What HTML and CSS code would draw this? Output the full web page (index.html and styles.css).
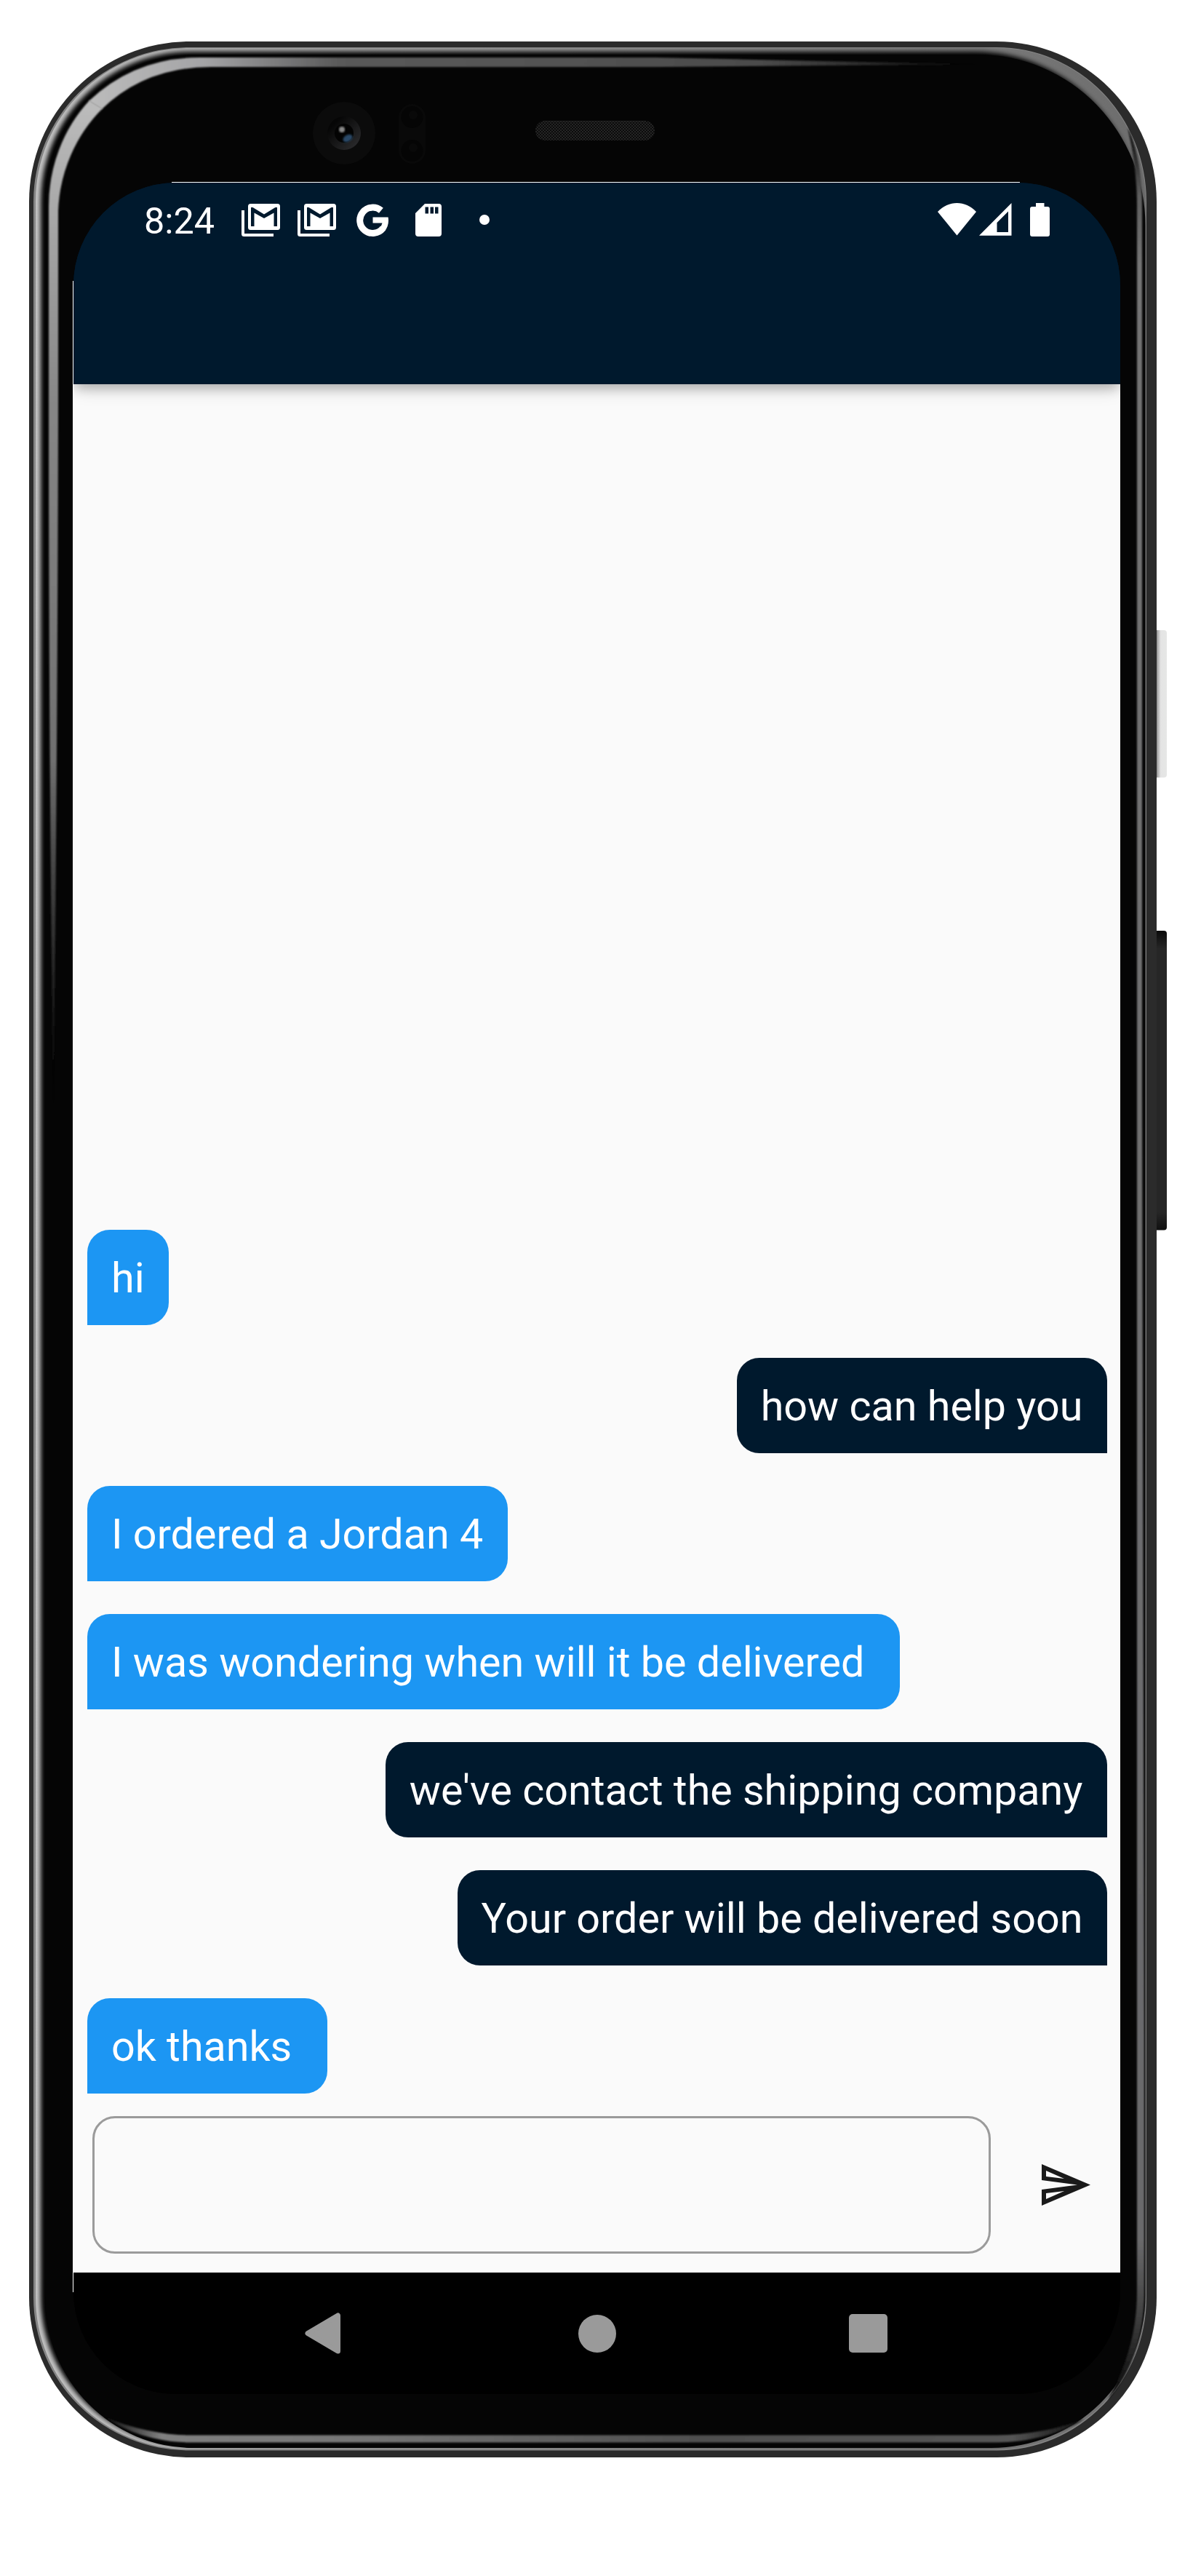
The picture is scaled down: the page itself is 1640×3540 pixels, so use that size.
FILE: index.html
```html
<!DOCTYPE html>
<html lang="en">
<head>
<meta charset="utf-8">
<title>Chat</title>
<link rel="stylesheet" href="styles.css">
</head>
<body>
<div class="phone">
  <svg class="phone__frame" width="1640" height="3540" viewBox="0 0 1640 3540" aria-hidden="true">
    <defs>
      <linearGradient id="rimFade" gradientUnits="userSpaceOnUse" x1="40" y1="0" x2="1590" y2="0">
        <stop offset="0" stop-color="#c4c4c4"/><stop offset=".3" stop-color="#a4a4a4"/><stop offset="1" stop-color="#6c6c6c"/>
      </linearGradient>
      <linearGradient id="topBand" gradientUnits="userSpaceOnUse" x1="120" y1="0" x2="1350" y2="0">
        <stop offset="0" stop-color="#bcbcbc"/><stop offset=".13" stop-color="#a4a4a6"/><stop offset=".28" stop-color="#5a5a5a"/><stop offset=".75" stop-color="#4c4c4c"/><stop offset="1" stop-color="#050505"/>
      </linearGradient>
      <linearGradient id="leftBand" gradientUnits="userSpaceOnUse" x1="0" y1="140" x2="0" y2="1530">
        <stop offset="0" stop-color="#bcbcbc"/><stop offset=".3" stop-color="#868686"/><stop offset=".65" stop-color="#707070"/><stop offset=".75" stop-color="#484848"/><stop offset=".9" stop-color="#181818"/><stop offset="1" stop-color="#050505"/>
      </linearGradient>
      <linearGradient id="rightBand" gradientUnits="userSpaceOnUse" x1="0" y1="175" x2="0" y2="3298">
        <stop offset="0" stop-color="#050505"/><stop offset=".03" stop-color="#5e5e5e"/><stop offset=".06" stop-color="#747474"/><stop offset=".93" stop-color="#6a6a6c"/><stop offset=".96" stop-color="#444"/><stop offset="1" stop-color="#050505"/>
      </linearGradient>
      <linearGradient id="bottomBand" gradientUnits="userSpaceOnUse" x1="140" y1="0" x2="1500" y2="0">
        <stop offset="0" stop-color="#050505"/><stop offset=".06" stop-color="#808080"/><stop offset=".25" stop-color="#777"/><stop offset=".6" stop-color="#505050"/><stop offset=".92" stop-color="#555"/><stop offset="1" stop-color="#050505"/>
      </linearGradient>
      <linearGradient id="lens" x1="0" y1="0" x2="1" y2="1">
        <stop offset=".2" stop-color="#060606"/><stop offset="1" stop-color="#303032"/>
      </linearGradient>
      <linearGradient id="power" x1="0" y1="0" x2="1" y2="0">
        <stop offset="0" stop-color="#8c8c8c"/><stop offset=".15" stop-color="#b4b4b4"/><stop offset=".4" stop-color="#e4e4e4"/><stop offset="1" stop-color="#e6e7e6"/>
      </linearGradient>
      <linearGradient id="volume" x1="0" y1="0" x2="0" y2="1">
        <stop offset="0" stop-color="#0a0a0a"/><stop offset=".06" stop-color="#262626"/><stop offset=".94" stop-color="#262626"/><stop offset="1" stop-color="#101010"/>
      </linearGradient>
      <pattern id="mesh" width="4" height="4" patternUnits="userSpaceOnUse">
        <rect width="4" height="4" fill="#0b0b0b"/><rect width="2" height="2" fill="#252525"/><rect x="2" y="2" width="2" height="2" fill="#252525"/>
      </pattern>
      <filter id="soft1"><feGaussianBlur stdDeviation="1"/></filter>
      <filter id="soft3"><feGaussianBlur stdDeviation="3"/></filter>
    </defs>

    <path d="M1590 866h10q4 0 4 4v194.500q0 4-4 4h-10z" fill="url(#power)"/>
    <path d="M1590 1279h10q4 0 4 4v403.500q0 4-4 4h-10z" fill="url(#volume)"/>

    <rect x="40" y="57" width="1550" height="3320" rx="220" fill="#2b2b2b"/>
    <!-- polished rim: nested outlines stepping from bright to black -->
    <path d="M46 277A214 212 0 0 1 260 65H1370A206 212 0 0 1 1576 277V3157A206 210.500 0 0 1 1370 3367.500H260A214 210.500 0 0 1 46 3157Z" fill="#858585"/>
    <path d="M49 277A211 211 0 0 1 260 66H1370A205 211 0 0 1 1575 277V3157A205 209 0 0 1 1370 3366H260A211 209 0 0 1 49 3157Z" fill="url(#rimFade)"/>
    <path d="M56 277A206 206 0 0 1 262 71H1340A230 235 0 0 1 1570 306V3150A220 211 0 0 1 1350 3361H265A209 204 0 0 1 56 3157Z" fill="#050505" filter="url(#soft3)"/>
    <path d="M62 280A203 205 0 0 1 265 75H1345A229.500 235 0 0 1 1574.500 310V3155A212 209 0 0 1 1362 3364H265A203 207 0 0 1 62 3157Z" fill="#050505"/>

    <path d="M67 285A190 205 0 0 1 123 138L141 149A195 205 0 0 0 80 290V560Q79 1050 73.500 1528Q67 1050 67 560Z" fill="url(#leftBand)" filter="url(#soft1)"/>
    <path d="M122 139Q185 79 275 79H900L1350 88.500L900 92H290Q200 92 140 150Z" fill="url(#topBand)" filter="url(#soft1)"/>
    <path d="M1550 175C1564 205 1570 240 1570 282V1500L1573 2800V3150C1573 3210 1555 3262 1523 3298C1545 3258 1563 3210 1563 3150V282C1563 240 1556 200 1550 175Z" fill="url(#rightBand)" filter="url(#soft1)"/>
    <path d="M143 3321C183 3338 225 3346.500 262 3346.500H1370C1415 3346 1455 3338 1490 3324C1460 3345 1410 3356.500 1370 3356.500H262C215 3356 175 3343 143 3321Z" fill="url(#bottomBand)" filter="url(#soft1)"/>

    <circle cx="473" cy="183" r="43" fill="#0b0b0b"/>
    <circle cx="473" cy="183" r="23" fill="url(#lens)"/>
    <circle cx="473" cy="183" r="13" fill="#030303"/>
    <circle cx="470" cy="178" r="4" fill="#888" filter="url(#soft1)"/>
    <ellipse cx="478" cy="190" rx="7" ry="4.500" transform="rotate(-30 478 190)" fill="#2c4a68" filter="url(#soft1)"/>
    <rect x="548" y="143" width="37" height="82" rx="18.500" fill="#090909"/>
    <circle cx="566.500" cy="161" r="15" fill="#050505"/><circle cx="566.500" cy="207" r="15" fill="#050505"/>
    <circle cx="568" cy="158" r="6" fill="#090909"/><circle cx="568" cy="203" r="6" fill="#090909"/>
    <rect x="736" y="166" width="164" height="27" rx="13.500" fill="url(#mesh)"/>
    <path d="M748 166.500H888" stroke="#222"/>
    <path d="M236 250.500H1402M100.500 386V3150" stroke="#fff"/>
  </svg>

  <main class="screen">
    <header class="appbar">
      <div class="status">
        <span class="status__time">8:24</span>
        <div class="status__notes">
          <svg class="status__mail" width="54" height="46" viewBox="0 0 54 46"><path fill="#fff" fill-rule="evenodd" d="M0 9h4v32h40v4H3.500Q0 45 0 41.500zM12.500 0h37Q53 0 53 3.500v29Q53 36 49.500 36h-37Q9 36 9 32.500v-29Q9 0 12.500 0zM13 5v26h4.500V12.500L31 20l13.500-7.500V31H49V5h-2.500L31 14.500 15.500 5z"/></svg>
          <svg class="status__mail" width="54" height="46" viewBox="0 0 54 46"><path fill="#fff" fill-rule="evenodd" d="M0 9h4v32h40v4H3.500Q0 45 0 41.500zM12.500 0h37Q53 0 53 3.500v29Q53 36 49.500 36h-37Q9 36 9 32.500v-29Q9 0 12.500 0zM13 5v26h4.500V12.500L31 20l13.500-7.500V31H49V5h-2.500L31 14.500 15.500 5z"/></svg>
          <svg class="status__g" width="45" height="45" viewBox="0 0 45 45"><path fill="none" stroke="#fff" stroke-width="9" d="M33.900 9.300A17.700 17.700 0 1 0 36.500 33.500"/><path fill="#fff" d="M22.500 18.500H43.600Q45.500 30 38.500 38L32 32.500Q35 29.500 35.500 26.500H22.500z"/></svg>
          <svg class="status__sd" width="36" height="45" viewBox="0 0 36 45"><path fill="#fff" fill-rule="evenodd" d="M13 0h19q4 0 4 4v37q0 4-4 4H4q-4 0-4-4V13zM13.500 4.500v9H18v-9zM20.500 4.500v9H25v-9zM27 4.500v9h4.500v-9z"/></svg>
          <span class="status__dot"></span>
        </div>
        <div class="status__system">
          <svg width="53" height="45" viewBox="0 0 53 45"><path fill="#fff" d="M0 12C15-4 38-4 53 12L26.500 44.500z"/></svg>
          <svg class="status__signal" width="45" height="45" viewBox="0 0 45 45"><path fill="#fff" fill-rule="evenodd" d="M44.500 0v44.700H0zM40 11.500L24.500 27v13H40z"/></svg>
          <svg class="status__battery" width="27" height="46" viewBox="0 0 27 46"><path fill="#fff" d="M8 0h11.500v5H24q3 0 3 3v35q0 3-3 3H3q-3 0-3-3V8q0-3 3-3h5z"/></svg>
        </div>
      </div>
    </header>

    <section class="chat">
      <p class="bubble bubble--in">hi</p>
      <p class="bubble bubble--out">how can help you</p>
      <p class="bubble bubble--in">I ordered a Jordan 4</p>
      <p class="bubble bubble--in bubble--trail">I was wondering when will it be delivered</p>
      <p class="bubble bubble--out">we've contact the shipping company</p>
      <p class="bubble bubble--out">Your order will be delivered soon</p>
      <p class="bubble bubble--in bubble--trail">ok thanks</p>
    </section>

    <form class="composer">
      <input class="composer__input" type="text" aria-label="Message">
      <button class="composer__send" type="button" aria-label="Send">
        <svg width="67" height="57" viewBox="0 0 67 57"><path fill="#1a1a1a" fill-rule="evenodd" d="M0 0L67 28.500 0 57V35L49 28.500 0 22zM6 9v8L31 20zM6 40v8L31 37z"/></svg>
      </button>
    </form>

    <nav class="navbar">
      <svg width="50" height="57" viewBox="0 0 50 57"><path fill="#9a9a9a" stroke="#9a9a9a" stroke-width="7" stroke-linejoin="round" d="M4 28.500L45.500 4v49z"/></svg>
      <span class="navbar__home"></span>
      <span class="navbar__recent"></span>
    </nav>
  </main>
</div>
</body>
</html>
```
FILE: styles.css
```css
* { box-sizing: border-box; }

body {
  margin: 0;
  background: #fff;
  font-family: Roboto, sans-serif;
}

.phone {
  display: grid;
  width: 1640px;
  height: 3540px;
}

.phone__frame,
.screen {
  grid-area: 1 / 1;
}

.screen {
  display: flex;
  flex-direction: column;
  width: 1439px;
  height: 3039px;
  margin: 251px 0 0 101px;
  border-radius: 141px;
  overflow: hidden;
  background: linear-gradient(#00192d 200px, #fafafa 200px, #fafafa 2872px, #000 2872px);
}

.appbar {
  height: 277px;
  flex: none;
  padding: 28px 97px 0 97px;
  background: #00192d;
  box-shadow: 0 8px 14px -2px rgba(0, 0, 0, .2), 0 10px 24px -4px rgba(0, 0, 0, .16);
}

.status {
  display: flex;
  height: 48px;
}

.status__time {
  width: 134px;
  color: #fff;
  font-size: 50.3px;
  line-height: 50px;
}

.status__notes {
  display: flex;
  flex: 1;
  align-items: flex-start;
  padding-top: 1px;
}

.status__mail { margin-right: 23px; }
.status__g { margin: 0 36px 0 4px; }
.status__sd { margin-right: 52px; }

.status__dot {
  width: 14px;
  height: 14px;
  margin-top: 15px;
  border-radius: 50%;
  background: #fff;
}

.status__system { display: flex; }
.status__signal { margin-left: 4px; }
.status__battery { margin-left: 25px; }

.chat {
  display: flex;
  flex: 1;
  flex-direction: column;
  align-items: flex-start;
  justify-content: flex-end;
  gap: 45px;
  padding: 0 18px 31.5px 19px;
}

.bubble {
  height: 131px;
  margin: 0;
  padding: 0 33.5px 0 33px;
  color: #fff;
  font-size: 57.45px;
  line-height: 134px;
  white-space: nowrap;
}

.bubble--in {
  border-radius: 31px 31px 31px 0;
  background: #1c96f3;
}

.bubble--out {
  align-self: flex-end;
  border-radius: 31px 31px 0 31px;
  background: #00192d;
}

.bubble--trail { padding-right: 49px; }

.composer {
  display: flex;
  flex: none;
  align-items: center;
  gap: 70px;
  height: 189px;
  margin: 0 0 26px;
  padding: 0 0 0 26px;
}

.composer__input {
  width: 1235px;
  height: 189px;
  border: 3px solid #9b9b9b;
  border-radius: 31px;
  background: transparent;
  font: 57px Roboto, sans-serif;
}

.composer__send {
  display: flex;
  padding: 0;
  border: 0;
  background: none;
}

.navbar {
  display: flex;
  flex: none;
  align-items: center;
  height: 167px;
  padding: 0 0 0 318px;
  background: #000;
}

.navbar__home {
  width: 52px;
  height: 52px;
  margin-left: 326px;
  border-radius: 50%;
  background: #9a9a9a;
}

.navbar__recent {
  width: 53px;
  height: 53px;
  margin-left: 320px;
  border-radius: 5px;
  background: #9a9a9a;
}
```
